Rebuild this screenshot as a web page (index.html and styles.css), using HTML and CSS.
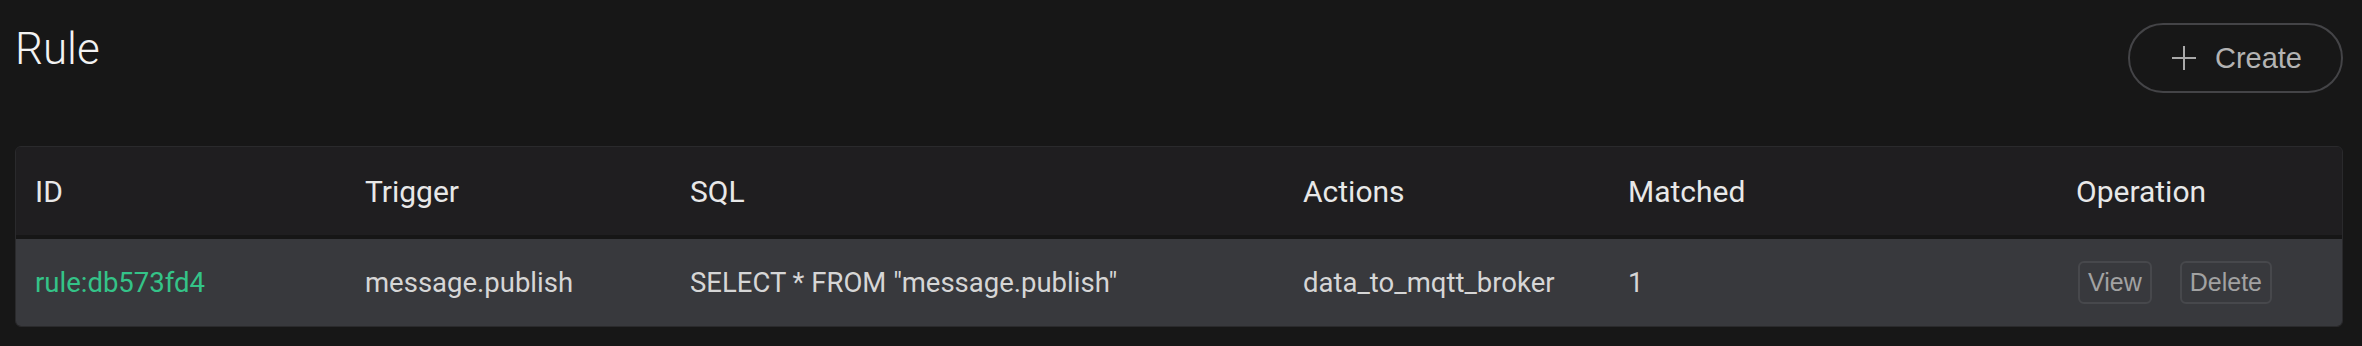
FILE: index.html
```html
<!DOCTYPE html>
<html lang="en">
<head>
<meta charset="utf-8">
<title>Rule</title>
<link rel="stylesheet" href="styles.css">
</head>
<body>
<div class="page">
  <div class="page-head">
    <h1 class="title">Rule</h1>
    <button class="create-btn" type="button">
      <svg class="plus" width="24" height="24" viewBox="0 0 24 24" aria-hidden="true">
        <path d="M12 0V24M0 12H24" stroke="currentColor" stroke-width="2" fill="none"/>
      </svg>
      <span>Create</span>
    </button>
  </div>
  <div class="card">
    <table class="rules">
      <colgroup>
        <col class="c-id"><col class="c-trigger"><col class="c-sql"><col class="c-actions"><col class="c-matched"><col class="c-op">
      </colgroup>
      <thead>
        <tr>
          <th>ID</th>
          <th>Trigger</th>
          <th>SQL</th>
          <th>Actions</th>
          <th>Matched</th>
          <th class="op">Operation</th>
        </tr>
      </thead>
      <tbody>
        <tr>
          <td><a class="rule-id" href="#">rule:db573fd4</a></td>
          <td>message.publish</td>
          <td>SELECT * FROM "message.publish"</td>
          <td>data_to_mqtt_broker</td>
          <td>1</td>
          <td class="op">
            <div class="ops">
              <button class="mini-btn" type="button">View</button>
              <button class="mini-btn" type="button">Delete</button>
            </div>
          </td>
        </tr>
      </tbody>
    </table>
  </div>
</div>
</body>
</html>
```

FILE: styles.css
```css
* { box-sizing: border-box; }

html, body {
  margin: 0;
  background: #171717;
}

body {
  font-family: Roboto, "Liberation Sans", sans-serif;
  color: #d9d9d9;
}

.page {
  padding: 23px 19px 0 15px;
}

.page-head {
  display: flex;
  justify-content: space-between;
  align-items: flex-start;
}

.title {
  margin: 0;
  font-size: 44px;
  line-height: 52px;
  font-weight: 300;
  color: #f2f2f2;
}

.create-btn {
  display: inline-flex;
  align-items: center;
  gap: 19px;
  height: 70px;
  padding: 0 39px 0 42px;
  border: 2px solid #444447;
  border-radius: 35px;
  background: transparent;
  color: #b3b3b3;
  font-family: "Liberation Sans", Arial, sans-serif;
  font-size: 29px;
  cursor: pointer;
}

.plus {
  display: block;
  color: #a9a9a9;
}

.card {
  margin-top: 53px;
  border: 1px solid #2a2a2c;
  border-radius: 6px;
  overflow: hidden;
  background: #1f1e20;
}

.rules {
  width: 100%;
  table-layout: fixed;
  border-collapse: separate;
  border-spacing: 0;
}

.c-id { width: 330px; }
.c-trigger { width: 325px; }
.c-sql { width: 613px; }
.c-actions { width: 325px; }
.c-matched { width: 448px; }
.c-op { width: 285px; }

.rules th {
  height: 92px;
  padding: 1px 0 0 19px;
  text-align: left;
  font-size: 30px;
  font-weight: 400;
  color: #e8e8e8;
  background: #1f1e20;
  border-bottom: 4px solid #161616;
  white-space: nowrap;
}

.rules td {
  height: 87px;
  padding: 0 0 0 19px;
  font-size: 27.5px;
  color: #d6d6d6;
  background: #38393d;
  white-space: nowrap;
}

.rules td.op { padding-left: 21px; }

.rule-id {
  color: #34c388;
  text-decoration: none;
}

.ops {
  display: flex;
  align-items: center;
  gap: 28px;
}

.mini-btn {
  height: 43px;
  padding: 0 8px;
  border: 2px solid #47484c;
  border-radius: 6px;
  background: transparent;
  color: #a2a2a2;
  font-family: "Liberation Sans", Arial, sans-serif;
  font-size: 25px;
  cursor: pointer;
}
```
